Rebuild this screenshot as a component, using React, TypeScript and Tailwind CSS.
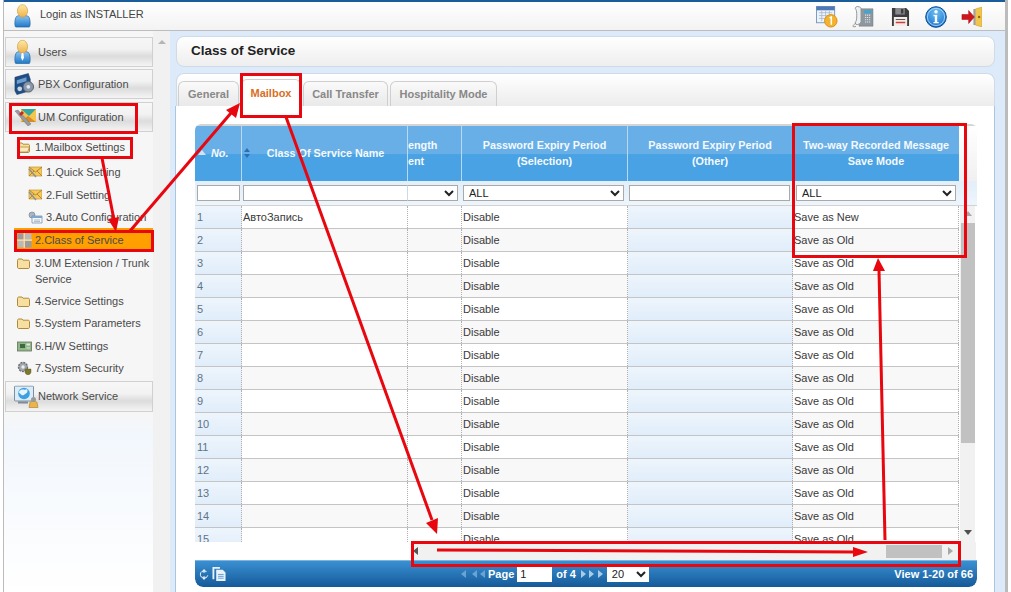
import React from "react";

const F = "[font-family:'Liberation_Sans',Arial,sans-serif]";

function UserGlyph({ tie = false, w = 20, h = 26 }: { tie?: boolean; w?: number; h?: number }) {
  return (
    <svg width={w} height={h} viewBox="0 0 20 26" preserveAspectRatio="none">
      <defs>
        <linearGradient id="hd" x1="0" y1="0" x2="0" y2="1"><stop offset="0" stopColor="#fde9a6" /><stop offset="1" stopColor="#eeb24a" /></linearGradient>
        <linearGradient id="bd" x1="0" y1="0" x2="0" y2="1"><stop offset="0" stopColor="#8cc6f2" /><stop offset="1" stopColor="#1f78c8" /></linearGradient>
      </defs>
      <path d="M2 25c-1.500-1-1.500-9 1-11.500 2-1.500 12-1.500 14 0 2.500 2.500 2.500 10.500 1 11.500z" fill="url(#bd)" stroke="#1d5f9c" strokeWidth=".7" />
      <ellipse cx="10" cy="7.500" rx="6" ry="6.800" fill="url(#hd)" stroke="#c98d2c" strokeWidth=".6" />
      {tie && <path d="M9 14h2l.7 5-1.700 3-1.700-3z" fill="#fff" />}
    </svg>
  );
}

function PbxIcon() {
  return (
    <svg width="21" height="23" viewBox="0 0 22 24">
      <path d="M1 5l14-4 2 6v12L3 23 1 19z" fill="#1f4f86" stroke="#173a63" strokeWidth=".6" />
      <path d="M3 8l10-3v4L3 12z" fill="#6f9fd0" />
      <circle cx="15" cy="15" r="5.500" fill="#8a97a8" stroke="#54606f" />
      <circle cx="15" cy="15" r="2" fill="#dfe6ee" />
      <circle cx="6" cy="17" r="2.500" fill="#c9d4e0" />
    </svg>
  );
}

function UmIcon() {
  return (
    <svg width="23" height="18" viewBox="0 0 23 18">
      <path d="M7 1h15v13H7z" fill="#f3c54a" />
      <path d="M7 1l8 7 7-7z" fill="#35a7a0" />
      <path d="M7 14l7-6 8 6z" fill="#d98a2b" />
      <path d="M1 3l3-1 13 14-3 2z" fill="#9a9a9a" stroke="#666" strokeWidth=".4" />
      <path d="M5 6l3-3 2 2-3 3z" fill="#c8262c" />
    </svg>
  );
}

function Folder({ open = false }: { open?: boolean }) {
  return (
    <svg width="13" height="11" viewBox="0 0 13 11">
      <path d="M.5 2.500c0-1 .5-1.500 1.500-1.500h3l1 1.200h5c1 0 1.500.5 1.500 1.500v5.300c0 1-.5 1.500-1.500 1.500H2c-1 0-1.500-.5-1.500-1.500z" fill="#f7dfa1" stroke="#b08a3c" />
      {open && <path d="M2.500 5h10l-1.800 5H.8z" fill="#fbeab9" stroke="#b08a3c" strokeWidth=".8" />}
    </svg>
  );
}

function Env() {
  return (
    <svg width="14" height="12" viewBox="0 0 14 12">
      <path d="M1 1h13v9H1z" fill="#f4c95a" stroke="#b98a2c" strokeWidth=".6" />
      <path d="M1 1l6.500 5L14 1M1 10l5-5M14 10L9 5" fill="none" stroke="#a8762a" strokeWidth=".8" />
      <path d="M1 3l7 8" stroke="#8f8f8f" strokeWidth="1.500" />
    </svg>
  );
}

function AutoCfg() {
  return (
    <svg width="15" height="13" viewBox="0 0 15 13">
      <circle cx="4" cy="4" r="3" fill="#a9b6c4" stroke="#6d7a88" strokeWidth=".6" />
      <path d="M4 5h10v7H4z" fill="#f3f6fa" stroke="#6a87a8" strokeWidth=".7" />
      <path d="M4 5h10v2H4z" fill="#7ea6cf" />
      <path d="M6 9h6M6 10.500h6" stroke="#8a96a4" strokeWidth=".6" />
    </svg>
  );
}

function GridCos() {
  return (
    <svg width="15" height="15" viewBox="0 0 15 15">
      <rect x=".5" y=".5" width="6" height="6" fill="#9c9c9c" />
      <rect x="8" y=".5" width="6.500" height="6" fill="#b9b9b9" />
      <rect x=".5" y="8" width="6" height="6.500" fill="#b9b9b9" />
      <rect x="8" y="8" width="6.500" height="6.500" fill="#9c9c9c" />
      <path d="M7.200 0v15M0 7.200h15" stroke="#efe7d6" strokeWidth="1.200" />
    </svg>
  );
}

function Hw() {
  return (
    <svg width="15" height="11" viewBox="0 0 15 11">
      <rect x=".5" y="1" width="14" height="9" fill="#8fb788" stroke="#66705f" strokeWidth=".8" />
      <rect x="3" y="3" width="5" height="4" fill="#3c6a3f" />
      <rect x="9.500" y="2.500" width="3.500" height="2" fill="#e2e7d7" />
      <path d="M9.500 7h3.500" stroke="#e2e7d7" />
    </svg>
  );
}

function Sec() {
  return (
    <svg width="15" height="14" viewBox="0 0 15 14">
      <circle cx="6" cy="6" r="4.500" fill="#a2a7ad" stroke="#6a6f75" strokeDasharray="2 1" strokeWidth="1.400" />
      <circle cx="6" cy="6" r="1.700" fill="#eceef0" />
      <path d="M8 8h6v3c0 1.500-1.500 2.500-3 3-1.500-.5-3-1.500-3-3z" fill="#7c7a2b" stroke="#4e4d1a" strokeWidth=".4" />
    </svg>
  );
}

function Net() {
  return (
    <svg width="26" height="23" viewBox="0 0 26 23">
      <rect x=".5" y=".5" width="19" height="15" rx="1" fill="#d9ecf8" stroke="#7b8fa3" />
      <circle cx="10" cy="8" r="5.800" fill="#3f9fdf" />
      <path d="M6 5c2-2 4 0 6-1s2 3 0 4-3 3-5 1-3-2-1-4z" fill="#e6f5ff" />
      <path d="M4 16h10v2H4z" fill="#7f8a96" />
      <path d="M15 22l1-5c1-2 6-2 7 0l1 5z" fill="#eab54a" stroke="#a97c23" strokeWidth=".6" />
      <circle cx="19.500" cy="14" r="2.500" fill="#9a9a9a" />
    </svg>
  );
}

function CalIcon() {
  return (
    <svg width="22" height="22" viewBox="0 0 23 23">
      <rect x=".5" y=".5" width="19" height="17" fill="#eef3f9" stroke="#7a97bd" />
      <rect x=".5" y=".5" width="19" height="4" fill="#4d79b8" />
      <path d="M3 7h14M3 10h14M3 13h14M6 5v11M10 5v11M14 5v11" stroke="#a3b5cc" strokeWidth=".8" />
      <circle cx="15.500" cy="15.500" r="6.500" fill="#f4b32e" stroke="#d98d14" />
      <path d="M14.200 12.500l1.800-1v8" stroke="#fff" strokeWidth="1.600" fill="none" />
    </svg>
  );
}

function PhoneIcon() {
  return (
    <svg width="24" height="22" viewBox="0 0 24 24" preserveAspectRatio="none">
      <path d="M10 3h12v19H8z" fill="#8d979e" stroke="#6d767d" strokeWidth=".5" />
      <rect x="13" y="4.500" width="7.500" height="3.500" fill="#45a4cf" />
      <path d="M14 10h6M14 12.500h6M14 15h6M14 17.500h6" stroke="#dfe4e8" strokeWidth="1.200" strokeDasharray="1.200 .8" />
      <path d="M5 1c2-1 5 0 5 2v14c0 2-3 4-5 3-1-1-1-3 0-3 1-3 1-11 0-13-1-1-1-2 0-3z" fill="#eef0f2" stroke="#8c9499" />
      <path d="M5 19c-2 1-3 2-3 3s2 1 3 0" fill="none" stroke="#777" strokeWidth=".8" />
    </svg>
  );
}

function SaveIcon() {
  return (
    <svg width="19" height="20" viewBox="0 0 20 20" preserveAspectRatio="none">
      <path d="M1 1h15l3 3v15H1z" fill="#3d3d3f" />
      <rect x="4.500" y="1" width="10" height="6.500" fill="#8a8a8e" />
      <rect x="10.500" y="2" width="2.500" height="4.500" fill="#3d3d3f" />
      <rect x="3" y="10" width="14" height="9" fill="#f1ece6" />
      <path d="M5 12.500h10" stroke="#555" />
      <path d="M5 15.500h10" stroke="#d83a3a" strokeWidth="1.500" />
    </svg>
  );
}

function InfoIcon() {
  return (
    <svg width="22" height="22" viewBox="0 0 22 22">
      <defs><radialGradient id="inf" cx=".5" cy=".3" r=".8"><stop offset="0" stopColor="#6cc0f5" /><stop offset="1" stopColor="#0e66c6" /></radialGradient></defs>
      <circle cx="11" cy="11" r="10.300" fill="url(#inf)" stroke="#0b4c99" />
      <circle cx="11" cy="11" r="8.600" fill="none" stroke="#cfe9fb" strokeWidth=".7" />
      <circle cx="11" cy="5.800" r="1.700" fill="#fff" />
      <path d="M8.500 9h3.700v7h1.500v1.300H8.500V16h1.300v-5.700H8.500z" fill="#fff" />
    </svg>
  );
}

function ExitIcon() {
  return (
    <svg width="21" height="20" viewBox="0 0 22 20" preserveAspectRatio="none">
      <path d="M15 2l7-2v20l-7-2z" fill="#f1c64d" stroke="#bd9229" strokeWidth=".5" />
      <rect x="13" y="2" width="2" height="16" fill="#9f9f9f" />
      <circle cx="19" cy="10" r="1.300" fill="#8d6a16" />
      <path d="M1 7.500h7V3.500l6 6.500-6 6.500v-4H1z" fill="#d4141c" stroke="#8e0e12" strokeWidth=".5" />
    </svg>
  );
}

function NavBtn({ icon, label, h = "h-[31px]" }: { icon: React.ReactNode; label: string; h?: string }) {
  return (
    <div className={`relative ml-[1px] flex ${h} w-[148px] items-center border border-[#d0d0d0] bg-[linear-gradient(#f7f7f7_0%,#f2f2f2_40%,#dcdcdc_65%,#f4f4f4_100%)] pl-[32px] text-[11px] text-[#4a4a4a]`}>
      <span className="absolute left-[8px] top-1/2 flex -translate-y-1/2 items-center">{icon}</span>
      {label}
    </div>
  );
}

function TreeItem({ icon, children, pl, h = 22, active = false, low = false }: { icon: React.ReactNode; children: React.ReactNode; pl: string; h?: number; active?: boolean; low?: boolean }) {
  const top = low ? "mt-[5px]" : "mt-[4px]";
  return (
    <div className={`flex items-start whitespace-nowrap text-[11px] leading-[16px] text-[#4a4a4a] ${pl} ${active ? "ml-[10px] bg-[#ff9f00]" : ""}`} style={{ height: h }}>
      <span className={`${top} flex h-[16px] w-[18px] shrink-0 items-center`}>{icon}</span>
      <span className={top}>{children}</span>
    </div>
  );
}

function Sidebar() {
  return (
    <div className="flex w-[166px] shrink-0">
      <div className="flex w-[149px] flex-col bg-[linear-gradient(#f6f6f6_0%,#f6f6f6_68%,#f2f7fd_72%,#ffffff_100%)] pt-[6px]">
        <NavBtn icon={<UserGlyph tie w={17} h={25} />} label="Users" h="h-[30px]" />
        <div className="h-[2px]" />
        <NavBtn icon={<PbxIcon />} label="PBX Configuration" h="h-[30px]" />
        <div className="h-[3px]" />
        <NavBtn icon={<UmIcon />} label="UM Configuration" h="h-[30px]" />
        <div className="h-[3px]" />
        <TreeItem icon={<Folder open />} pl="pl-[13px]" h={25}>1.Mailbox Settings</TreeItem>
        <TreeItem icon={<Env />} pl="pl-[24px]" h={23}>1.Quick Setting</TreeItem>
        <TreeItem icon={<Env />} pl="pl-[24px]" h={22}>2.Full Setting</TreeItem>
        <TreeItem icon={<AutoCfg />} pl="pl-[24px]" h={23}>3.Auto Configuration</TreeItem>
        <TreeItem icon={<GridCos />} pl="pl-[3px]" h={22} active>2.Class of Service</TreeItem>
        <TreeItem icon={<Folder />} pl="pl-[13px]" h={39} low>3.UM Extension / Trunk<br />Service</TreeItem>
        <TreeItem icon={<Folder />} pl="pl-[13px]" h={22}>4.Service Settings</TreeItem>
        <TreeItem icon={<Folder />} pl="pl-[13px]" h={23}>5.System Parameters</TreeItem>
        <TreeItem icon={<Hw />} pl="pl-[13px]" h={22}>6.H/W Settings</TreeItem>
        <TreeItem icon={<Sec />} pl="pl-[13px]" h={23}>7.System Security</TreeItem>
        <div className="h-[2px] shrink-0" />
        <NavBtn icon={<Net />} label="Network Service" />
      </div>
      <div className="flex w-[17px] justify-center bg-[#f1f1f1] pt-[9px]">
        <div className="h-0 w-0 border-x-[4px] border-b-[4px] border-x-transparent border-b-[#b5b5b5]" />
      </div>
    </div>
  );
}

const cols = ["w-[47px]", "w-[166px]", "w-[54px]", "w-[166px]", "w-[165px]", "w-[166px]"];

function HeadCell({ w, children, border = true }: { w: string; children: React.ReactNode; border?: boolean }) {
  return (
    <div className={`flex h-full ${w} shrink-0 flex-col items-center justify-center pb-[2px] text-center text-[10.8px] font-bold leading-[16px] text-[#f4f9fd] ${border ? "border-r border-[#b9d9f2]" : ""}`}>
      {children}
    </div>
  );
}

function Sel({ w, value, seam = false }: { w: string; value: string; seam?: boolean }) {
  return (
    <select defaultValue={value} className={`h-[16px] ${w} border border-[#a9a9a9] ${seam ? "border-l-[#cdd9e6]" : ""} bg-white pl-[1px] text-[11px] leading-[14px] text-[#222] outline-none`}>
      <option>{value}</option>
    </select>
  );
}

function Row({ i }: { i: number }) {
  const even = i % 2 === 0;
  const base = "h-full shrink-0 border-r border-dotted border-[#b0b0b0] px-[1px] leading-[23px]";
  return (
    <div className={`flex h-[23px] shrink-0 border-b border-[#c4c4c4] text-[11px] text-[#3a3a3a] ${even ? "bg-[#f8f8f8]" : "bg-white"}`}>
      <div className={`${base} ${cols[0]} bg-[linear-gradient(#eef5fc,#e0edfa)] pl-[2px] text-[#607487]`}>{i}</div>
      <div className={`${base} ${cols[1]}`}>{i === 1 ? "АвтоЗапись" : ""}</div>
      <div className={`${base} ${cols[2]}`} />
      <div className={`${base} ${cols[3]}`}>Disable</div>
      <div className={`${base} ${cols[4]} bg-[linear-gradient(#eef5fc,#e0edfa)]`} />
      <div className={`${base} ${cols[5]}`}>{i === 1 ? "Save as New" : "Save as Old"}</div>
    </div>
  );
}

function Tri({ dir, color = "#777" }: { dir: "l" | "r" | "u" | "d"; color?: string }) {
  const p = { l: "M6 0v8L1 4z", r: "M1 0v8l5-4z", u: "M4 1l4 5H0z", d: "M0 1h8L4 6z" }[dir];
  return <svg width="8" height="8" viewBox="0 0 8 8"><path d={p} fill={color} /></svg>;
}

function Table() {
  const rows = Array.from({ length: 15 }, (_, k) => k + 1);
  return (
    <div className="flex w-[782px] flex-col overflow-hidden rounded-t-[6px] rounded-b-[8px] bg-white">
      <div className="flex h-[57px] shrink-0 border-t-2 border-[#d5d5d5] bg-[linear-gradient(#ffffff_0%,#f0f0f0_100%)]">
        <div className="flex h-full w-[764px] shrink-0 bg-[linear-gradient(#69afe7_0%,#69afe7_50%,#48a2e3_52%,#48a2e3_100%)]">
          <HeadCell w={cols[0]}><span className="flex w-full items-center gap-[5px] pl-[3px] italic"><Tri dir="u" color="#cfe4f6" />No.</span></HeadCell>
          <HeadCell w={cols[1]}><span className="flex w-full items-center"><span className="ml-[2px] flex flex-col"><svg width="6" height="10" viewBox="0 0 6 10"><path d="M3 0l3 4H0zM3 10L0 6h6z" fill="#2c6fb4" /></svg></span><span className="flex-1 pr-[6px] text-center">Class Of Service Name</span></span></HeadCell>
          <HeadCell w={cols[2]}><span className="w-full text-left">ength<br />ent</span></HeadCell>
          <HeadCell w={cols[3]}>Password Expiry Period<br />(Selection)</HeadCell>
          <HeadCell w={cols[4]}>Password Expiry Period<br />(Other)</HeadCell>
          <HeadCell w={cols[5]} border={false}>Two-way Recorded Message<br />Save Mode</HeadCell>
        </div>
      </div>
      <div className="flex h-[25px] shrink-0 items-center border-b border-[#d2d2d2] bg-[linear-gradient(#e2eef9,#eef5fc)]">
        <div className={`${cols[0]} flex pl-[2px]`}><div className="h-[16px] w-[43px] border border-[#a9a9a9] bg-white" /></div>
        <div className="flex w-[220px] shrink-0 pl-[1px]"><div className="h-[16px] w-[164px] border border-r-0 border-[#a9a9a9] bg-white" /><Sel w="w-[51px]" value="" seam /></div>
        <div className={`${cols[3]} flex pl-[1px]`}><Sel w="w-[161px]" value="ALL" /></div>
        <div className={`${cols[4]} flex pl-[1px]`}><div className="h-[16px] w-[161px] border border-[#a9a9a9] bg-white" /></div>
        <div className={`${cols[5]} flex pl-[3px]`}><Sel w="w-[160px]" value="ALL" /></div>
      </div>
      <div className="flex h-[336px] shrink-0 overflow-hidden">
        <div className="flex w-[764px] shrink-0 flex-col">{rows.map((i) => <Row key={i} i={i} />)}</div>
        <div className="ml-[1px] flex w-[15px] flex-col items-center bg-[#f1f1f1] pt-[4px]">
          <Tri dir="u" color="#a8a8a8" />
          <div className="mt-[5px] h-[220px] w-[14px] shrink-0 bg-[#c1c1c1]" />
          <div className="mt-[86px]"><Tri dir="d" color="#505050" /></div>
        </div>
      </div>
      <div className="flex h-[18px] shrink-0 bg-white">
        <div className="w-[217px] shrink-0" />
        <div className="flex h-full w-[564px] items-center bg-[#f1f1f1]">
          <Tri dir="l" color="#555" />
          <div className="ml-[466px] h-[13px] w-[56px] bg-[#c1c1c1]" />
          <span className="ml-[5px]"><Tri dir="r" color="#a8a8a8" /></span>
        </div>
      </div>
      <div className="flex h-[27px] shrink-0 items-center rounded-b-[8px] border-t border-[#7db5e2] bg-[linear-gradient(#3a90d2,#155a99)] pl-[4px] pr-[4px] text-[11px] font-bold text-white">
        <svg width="10" height="13" viewBox="0 0 12 14"><path d="M9 3.500A4.500 4.500 0 1 0 10.500 8M6 13l-1.500-3h3zM6 1l1.500 3h-3z" fill="none" stroke="#e8f2fb" strokeWidth="1.200" /></svg>
        <svg width="14" height="14" viewBox="0 0 14 15" className="ml-[3px]"><path d="M0 0h8v2H2v11H0z" fill="#e8f2fb" /><path d="M4 3h7l3 3v9H4z" fill="#e8f2fb" /><path d="M6 8h6M6 10h6M6 12h6" stroke="#5e9bd0" /></svg>
        <span className="ml-[234px] flex items-center gap-[3px]"><Tri dir="l" color="#6aa3d3" /><span className="flex"><Tri dir="l" color="#6aa3d3" /><Tri dir="l" color="#6aa3d3" /></span></span>
        <span className="ml-[1px]">Page</span>
        <div className="ml-[3px] flex h-[16px] w-[35px] items-center bg-white pl-[3px] font-normal text-[#222]">1</div>
        <span className="ml-[4px]">of 4</span>
        <span className="ml-[4px] flex items-center gap-[1px]"><span className="flex"><Tri dir="r" color="#a8cbe8" /><Tri dir="r" color="#a8cbe8" /></span><Tri dir="r" color="#a8cbe8" /></span>
        <select defaultValue="20" className="ml-[2px] h-[16px] w-[42px] bg-white pl-[1px] text-[11px] font-normal text-[#222] outline-none"><option>20</option></select>
        <span className="ml-auto">View 1-20 of 66</span>
      </div>
    </div>
  );
}

function Tab({ label, active = false, w }: { label: string; active?: boolean; w: string }) {
  return (
    <div className={`flex ${w} items-center justify-center rounded-t-[6px] border border-b-0 border-[#cfcfcf] text-[11px] font-bold ${active ? "h-[27px] bg-white text-[#d86f1e]" : "h-[25px] bg-[linear-gradient(#fafafa,#e9e9e9)] text-[#888]"}`}>
      {label}
    </div>
  );
}

function Main() {
  return (
    <div className="flex flex-1 flex-col bg-[#dceafa] pl-[5px] pr-[10px] pt-[5px]">
      <div className="ml-[1px] flex h-[31px] shrink-0 items-center rounded-[8px] border border-[#cfdbe7] bg-[linear-gradient(#ffffff,#eeeeee)] pl-[14px] text-[13.5px] font-bold text-[#222]">
        Class of Service
      </div>
      <div className="mt-[6px] flex flex-1 flex-col">
        <div className="ml-[1px] flex h-[33px] shrink-0 items-end gap-[2px] rounded-t-[8px] border border-b-0 border-[#cfdbe7] bg-[linear-gradient(#ffffff,#ececec)] pl-[1px]">
          <Tab label="General" w="w-[61px]" />
          <Tab label="Mailbox" active w="w-[60px]" />
          <Tab label="Call Transfer" w="w-[85px]" />
          <Tab label="Hospitality Mode" w="w-[107px]" />
        </div>
        <div className="flex-1 border-l border-r border-[#a9c6de] bg-white pl-[19px] pt-[18px]">
          <Table />
        </div>
      </div>
    </div>
  );
}

function Annotations() {
  const red = "#e8060f";
  return (
    <svg className="pointer-events-none absolute left-0 top-0" width="1011" height="592" viewBox="0 0 1011 592" fill="none">
      <g stroke={red} strokeWidth="3">
        <rect x="10.500" y="104.500" width="126" height="28" />
        <rect x="18.500" y="138.500" width="113" height="19" />
        <rect x="15.500" y="231.500" width="137" height="19" />
        <rect x="241.500" y="74.500" width="59" height="42" />
        <rect x="793.500" y="124.500" width="172" height="132" />
        <rect x="412.500" y="542.500" width="547" height="23" />
      </g>
      <g stroke={red} strokeWidth="3">
        <path d="M102 158L114 220" />
        <path d="M130 231L231 113" />
        <path d="M286 117L432 520" />
        <path d="M437 550L855 552" />
        <path d="M885 540L879 270" />
      </g>
      <g fill={red}>
        <path d="M116 232L108 219L119 217z" />
        <path d="M240 103L236 118L226 110z" />
        <path d="M437 534L426 523L438 518z" />
        <path d="M868 552L853 547L853 557z" />
        <path d="M878 258L873 271L885 271z" />
      </g>
    </svg>
  );
}

export default function App() {
  return (
    <div className={`relative h-[592px] w-[1011px] overflow-hidden bg-white ${F}`}>
      <div className="ml-[3px] flex h-full w-[1005px] flex-col border-l border-r-[3px] border-[#bcbcbc]">
        <div className="h-[2px] shrink-0 bg-[#1b5c9b]" />
        <div className="flex h-[29px] shrink-0 items-center border-b border-[#bdbdbd] bg-[linear-gradient(#ffffff,#f3f3f3)] pl-[10px] text-[11px] text-[#444]">
          <UserGlyph w={17} h={24} />
          <span className="ml-[9px] mt-[-4px]">Login as INSTALLER</span>
          <div className="ml-[672px] mt-[2px] flex items-center">
            <CalIcon />
            <span className="ml-[13px]"><PhoneIcon /></span>
            <span className="ml-[16px]"><SaveIcon /></span>
            <span className="ml-[15px]"><InfoIcon /></span>
            <span className="ml-[14px]"><ExitIcon /></span>
          </div>
        </div>
        <div className="flex min-h-0 flex-1">
          <Sidebar />
          <Main />
        </div>
      </div>
      <Annotations />
    </div>
  );
}
